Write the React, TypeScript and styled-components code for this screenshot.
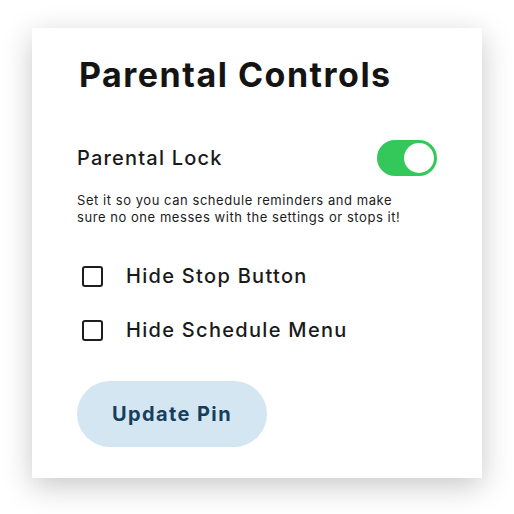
import React, { useState } from "react";
import styled, { createGlobalStyle } from "styled-components";

const Global = createGlobalStyle`
  html, body { margin: 0; padding: 0; background: #ffffff; }
  body { font-family: "Inter", "Noto Sans", sans-serif; color: #151515; }
`;

const Page = styled.div`
  width: 514px;
  height: 514px;
  padding: 28px 32px 0 32px;
  box-sizing: border-box;
`;

const Card = styled.div`
  width: 450px;
  height: 450px;
  box-sizing: border-box;
  background: #ffffff;
  box-shadow: 0 8px 28px rgba(0, 0, 0, 0.22);
  padding: 26px 45px 0 45px;
  display: flex;
  flex-direction: column;
`;

const Title = styled.h1`
  margin: 0 0 0 2px;
  font-size: 34px;
  line-height: 42px;
  font-weight: 700;
  letter-spacing: 1.5px;
  color: #141414;
`;

const LockRow = styled.div`
  margin-top: 44px;
  display: flex;
  align-items: center;
  justify-content: space-between;
`;

const LockLabel = styled.span`
  font-size: 20px;
  font-weight: 500;
  letter-spacing: 1.2px;
  color: #1a1a1a;
`;

const Toggle = styled.button<{ $on: boolean }>`
  width: 60px;
  height: 36px;
  border-radius: 18px;
  border: none;
  padding: 3px;
  background: ${(p) => (p.$on ? "#34c759" : "#d0d0d0")};
  display: flex;
  justify-content: ${(p) => (p.$on ? "flex-end" : "flex-start")};
  cursor: pointer;
  box-sizing: border-box;
`;

const Knob = styled.span`
  width: 30px;
  height: 30px;
  border-radius: 50%;
  background: #ffffff;
`;

const Description = styled.p`
  margin: 16px 0 0 0;
  font-size: 13px;
  line-height: 17px;
  letter-spacing: 0.55px;
  color: #1c1c1c;
`;

const Options = styled.div`
  margin-top: 38px;
  display: flex;
  flex-direction: column;
  gap: 30px;
`;

const OptionRow = styled.label`
  display: flex;
  align-items: center;
  gap: 23px;
  padding-left: 5px;
  cursor: pointer;
`;

const Box = styled.span<{ $checked: boolean }>`
  width: 17px;
  height: 17px;
  border: 2.5px solid #1e1e1e;
  border-radius: 3px;
  background: ${(p) => (p.$checked ? "#1e1e1e" : "transparent")};
  flex-shrink: 0;
`;

const OptionText = styled.span`
  font-size: 20px;
  font-weight: 500;
  letter-spacing: 1.3px;
  color: #1a1a1a;
`;

const PinButton = styled.button`
  margin-top: 39px;
  width: 190px;
  height: 66px;
  border-radius: 33px;
  border: none;
  background: #d4e6f2;
  color: #163f5f;
  font-family: "Inter", "Noto Sans", sans-serif;
  font-size: 20px;
  font-weight: 700;
  letter-spacing: 1.4px;
  cursor: pointer;
`;

export default function App() {
  const [lock, setLock] = useState(true);
  const [opts, setOpts] = useState({ stop: false, schedule: false });
  return (
    <>
      <Global />
      <Page>
        <Card>
          <Title>Parental Controls</Title>
          <LockRow>
            <LockLabel>Parental Lock</LockLabel>
            <Toggle $on={lock} onClick={() => setLock(!lock)} aria-label="Parental Lock">
              <Knob />
            </Toggle>
          </LockRow>
          <Description>
            Set it so you can schedule reminders and make
            <br />
            sure no one messes with the settings or stops it!
          </Description>
          <Options>
            <OptionRow onClick={() => setOpts({ ...opts, stop: !opts.stop })}>
              <Box $checked={opts.stop} />
              <OptionText>Hide Stop Button</OptionText>
            </OptionRow>
            <OptionRow onClick={() => setOpts({ ...opts, schedule: !opts.schedule })}>
              <Box $checked={opts.schedule} />
              <OptionText>Hide Schedule Menu</OptionText>
            </OptionRow>
          </Options>
          <PinButton>Update Pin</PinButton>
        </Card>
      </Page>
    </>
  );
}
